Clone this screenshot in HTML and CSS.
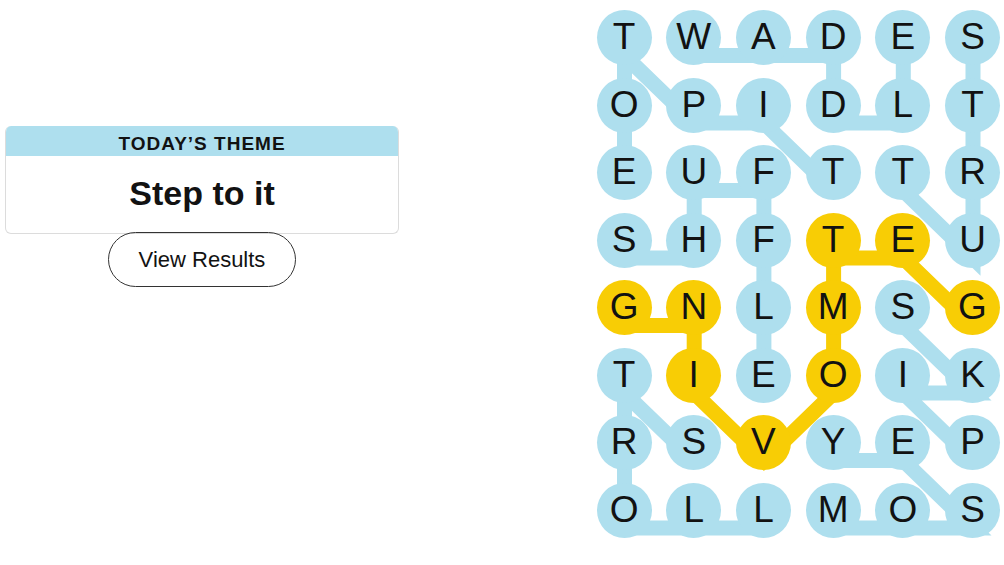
FILE: index.html
```html
<!DOCTYPE html>
<html lang="en">

<head>
  <meta charset="UTF-8">
  <title>Strands</title>
  <link rel="stylesheet" href="styles.css">
</head>

<body>
  <div class="page">
    <div class="side">
      <div class="theme">
        <div class="theme-head">Today’s Theme</div>
        <div class="theme-body">Step to it</div>
      </div>
      <button class="results">View Results</button>
    </div>

    <div class="board">
      <!-- word paths, drawn under the letters -->
      <svg class="paths" width="404" height="545">
        <g class="found">
          <polyline points="236.6,180.5 166.9,113 97.2,113 27.5,45.5 27.5,113 27.5,180.5" />
          <polyline points="97.2,45.5 166.9,45.5 236.6,45.5 236.6,113 306.3,113 306.3,45.5" />
          <polyline points="376,45.5 376,113 376,180.5 376,248 306.3,180.5" />
          <polyline points="27.5,248 97.2,248 97.2,180.5 166.9,180.5 166.9,248 166.9,315.5 166.9,383" />
          <polyline points="306.3,315.5 376,383 306.3,383 376,450.5" />
          <polyline points="97.2,450.5 27.5,383 27.5,450.5 27.5,518 97.2,518 166.9,518" />
          <polyline points="236.6,518 306.3,518 376,518 306.3,450.5 236.6,450.5" />
        </g>
        <g class="spangram">
          <polyline points="27.5,315.5 97.2,315.5 97.2,383 166.9,450.5 236.6,383 236.6,315.5 236.6,248 306.3,248 376,315.5" />
        </g>
      </svg>

      <div class="cell found">T</div>
      <div class="cell found">W</div>
      <div class="cell found">A</div>
      <div class="cell found">D</div>
      <div class="cell found">E</div>
      <div class="cell found">S</div>

      <div class="cell found">O</div>
      <div class="cell found">P</div>
      <div class="cell found">I</div>
      <div class="cell found">D</div>
      <div class="cell found">L</div>
      <div class="cell found">T</div>

      <div class="cell found">E</div>
      <div class="cell found">U</div>
      <div class="cell found">F</div>
      <div class="cell found">T</div>
      <div class="cell found">T</div>
      <div class="cell found">R</div>

      <div class="cell found">S</div>
      <div class="cell found">H</div>
      <div class="cell found">F</div>
      <div class="cell span">T</div>
      <div class="cell span">E</div>
      <div class="cell found">U</div>

      <div class="cell span">G</div>
      <div class="cell span">N</div>
      <div class="cell found">L</div>
      <div class="cell span">M</div>
      <div class="cell found">S</div>
      <div class="cell span">G</div>

      <div class="cell found">T</div>
      <div class="cell span">I</div>
      <div class="cell found">E</div>
      <div class="cell span">O</div>
      <div class="cell found">I</div>
      <div class="cell found">K</div>

      <div class="cell found">R</div>
      <div class="cell found">S</div>
      <div class="cell span">V</div>
      <div class="cell found">Y</div>
      <div class="cell found">E</div>
      <div class="cell found">P</div>

      <div class="cell found">O</div>
      <div class="cell found">L</div>
      <div class="cell found">L</div>
      <div class="cell found">M</div>
      <div class="cell found">O</div>
      <div class="cell found">S</div>
    </div>
  </div>
</body>

</html>
```

FILE: styles.css
```css
body {
  margin: 0;
  background: #ffffff;
  color: #121212;
  font-family: "Liberation Sans", Arial, sans-serif;
}

.page {
  display: flex;
  justify-content: space-between;
  align-items: flex-start;
  padding: 10px 4px 0 5px;
}

/* left column */
.side {
  width: 394px;
  padding-top: 116px;
  display: flex;
  flex-direction: column;
  align-items: center;
}

.theme {
  width: 100%;
  box-sizing: border-box;
  border: 1px solid #dcdcdc;
  border-top: 0;
  border-radius: 6px;
  overflow: hidden;
}

.theme-head {
  height: 30px;
  box-sizing: border-box;
  padding-top: 6px;
  line-height: 24px;
  background: #aedfee;
  text-align: center;
  text-transform: uppercase;
  font-weight: bold;
  font-size: 19px;
  letter-spacing: 1px;
}

.theme-body {
  height: 77px;
  line-height: 75px;
  text-align: center;
  font-weight: bold;
  font-size: 34px;
}

.results {
  margin-top: -2px;
  width: 188px;
  height: 55px;
  border: 1px solid #333333;
  border-radius: 28px;
  background: transparent;
  color: #121212;
  font-family: "Liberation Sans", Arial, sans-serif;
  font-size: 22px;
  line-height: 53px;
  padding: 0;
}

/* letter board */
.board {
  position: relative;
  display: grid;
  grid-template-columns: repeat(6, 55px);
  grid-auto-rows: 55px;
  column-gap: 14.7px;
  row-gap: 12.5px;
}

.paths {
  position: absolute;
  left: 0;
  top: 0;
  overflow: visible;
  z-index: 0;
}

.paths polyline {
  fill: none;
  stroke-width: 15;
  stroke-linejoin: miter;
  stroke-linecap: butt;
}

.paths .found polyline {
  stroke: #aedfee;
}

.paths .spangram polyline {
  stroke: #f8cd05;
}

.cell {
  position: relative;
  z-index: 1;
  width: 55px;
  height: 55px;
  border-radius: 50%;
  text-align: center;
  font-size: 37px;
  line-height: 53px;
}

.cell.found {
  background: #aedfee;
}

.cell.span {
  background: #f8cd05;
}
```
